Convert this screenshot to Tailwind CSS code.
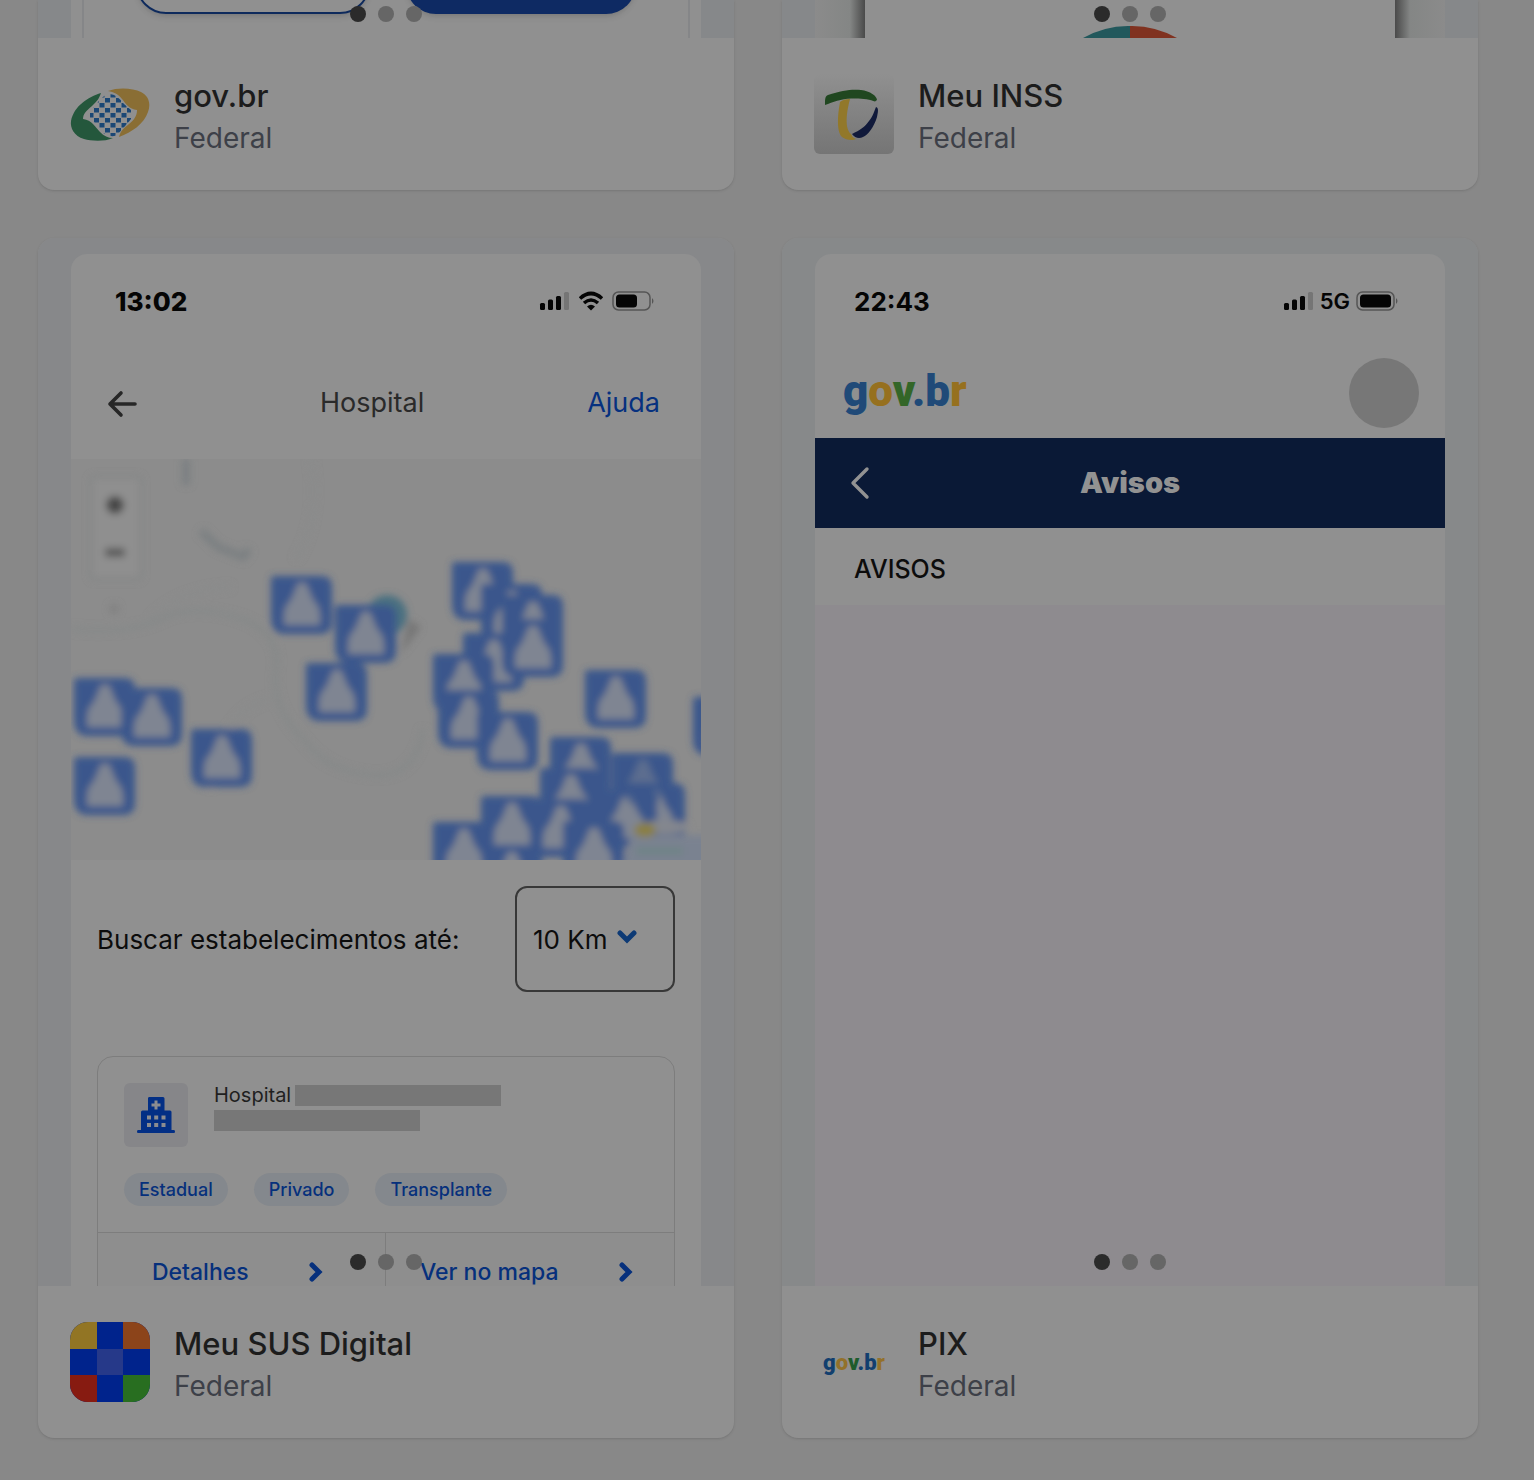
<!DOCTYPE html>
<html lang="pt-BR">
<head>
<meta charset="utf-8">
<meta name="viewport" content="width=device-width, initial-scale=1">
<title>Aplicativos federais</title>
<script src="https://cdn.jsdelivr.net/npm/@tailwindcss/browser@4"></script>
</head>
<body class="bg-[#888888] font-['Inter',sans-serif] text-[#1c1c1c]">
<main class="grid grid-cols-2 gap-12 pr-14 pl-[38px] pb-[42px]">

  <!-- gov.br -->
  <article class="overflow-hidden rounded-b-2xl bg-[#909090] shadow-sm">
    <div class="relative h-[38px] overflow-hidden bg-[#86888a] px-[33px]">
      <div class="flex h-full bg-[#909090] px-[11px]">
        <div class="flex h-full w-full items-end gap-9 border-x-2 border-[#858688] px-[52px] pb-6">
          <button aria-label="Voltar" class="-mt-10 h-[60px] flex-1 shrink-0 rounded-full border-2 border-[#0e2a5c] shadow-md"></button>
          <button aria-label="Continuar" class="-mt-10 h-[60px] flex-1 shrink-0 rounded-full bg-[#0e2a63] shadow-md"></button>
        </div>
      </div>
      <div class="absolute inset-x-0 bottom-4 flex justify-center gap-3">
        <button aria-label="Imagem 1" class="size-4 rounded-full bg-[#2b2b2b]"></button>
        <button aria-label="Imagem 2" class="size-4 rounded-full bg-[#666666]"></button>
        <button aria-label="Imagem 3" class="size-4 rounded-full bg-[#666666]"></button>
      </div>
    </div>
    <div class="flex h-[152px] items-center gap-6 px-8">
      <svg class="size-20" viewBox="0 0 80 80" aria-hidden="true">
        <defs>
          <pattern id="checks" x="35" y="34" width="11" height="10" patternUnits="userSpaceOnUse">
            <path d="M0 0h5v4.4H0zM5.5 5h5v4.4h-5z" fill="#1a4775"/>
          </pattern>
        </defs>
        <path d="M31 19C29 25 27 27 22 32C16 37 13 40 13 45C22 46 25 53 30 58C34 62 38 64 43 64C34 68 21 67 14 65C4 62 0 54 1 47C4 32 18 23 31 19Z" fill="#24573c"/>
        <path d="M38 17C48 13 63 14 71 18C79 22 81 30 78 38C74 50 62 58 49 63C51 56 54 54 59 50C64 46 67 42 67 36C59 35 56 30 52 25C48 20 44 18 38 17Z" fill="#8a6e34"/>
        <path d="M38 20C46 20 50 25 54 30L61 36V45C58 49 53 54 48 60C44 64 37 62 32 58C28 53 25 48 20 44V37C25 33 30 23 38 20Z" fill="url(#checks)"/>
      </svg>
      <div class="pt-1">
        <h2 class="text-[31px]/[44px] font-medium"><a href="#">gov.br</a></h2>
        <p class="text-[28px]/[40px] text-[#3d4048]">Federal</p>
      </div>
    </div>
  </article>

  <!-- Meu INSS -->
  <article class="overflow-hidden rounded-b-2xl bg-[#909090] shadow-sm">
    <div class="relative h-[38px] overflow-hidden bg-[#86888a] px-[33px]">
      <div class="flex h-full bg-[#8b8b8b]">
        <div class="w-[50px] bg-linear-to-l from-[#4a4a4a] via-[#848685] via-30% to-[#8b8b8b]"></div>
        <div class="flex flex-1 items-end justify-center bg-[#909090]">
          <svg class="h-3 w-24" viewBox="0 0 96 12" aria-hidden="true">
            <path d="M48 0V12H1A94 94 0 0 1 48 0Z" fill="#22585c"/>
            <path d="M48 0V12H95A94 94 0 0 0 48 0Z" fill="#803220"/>
          </svg>
        </div>
        <div class="w-[50px] bg-linear-to-r from-[#4a4a4a] via-[#848685] via-30% to-[#8b8b8b]"></div>
      </div>
      <div class="absolute inset-x-0 bottom-4 flex justify-center gap-3">
        <button aria-label="Imagem 1" class="size-4 rounded-full bg-[#2b2b2b]"></button>
        <button aria-label="Imagem 2" class="size-4 rounded-full bg-[#666666]"></button>
        <button aria-label="Imagem 3" class="size-4 rounded-full bg-[#666666]"></button>
      </div>
    </div>
    <div class="flex h-[152px] items-center gap-6 px-8">
      <svg class="size-20 rounded-md bg-linear-to-b from-[#909090] to-[#757575]" viewBox="0 0 80 80" aria-hidden="true">
        <path d="M11 31C11 25 11 22 14 21C28 16 39 15 47 16C56 17 63 22 63 26L61 27.500C56 25 46 24 37 24.500C27 25 19 28 11 31Z" fill="#204720"/>
        <path d="M26 28C28 26 32 25 36 25C33 36 32 45 33 52C34 59 38 60 38 62C39 64 41 64 42 65C38 67 32 66 28 63C22 57 24 39 26 28Z" fill="#92782a"/>
        <path d="M62 33C65 34 64 38 63 43C60 53 54 61 49 63C45 65 41 64 38 60C46 56 51 53 55 47C59 42 60 38 62 33Z" fill="#10193a"/>
      </svg>
      <div class="pt-1">
        <h2 class="text-[31px]/[44px] font-medium"><a href="#">Meu INSS</a></h2>
        <p class="text-[28px]/[40px] text-[#3d4048]">Federal</p>
      </div>
    </div>
  </article>

  <!-- Meu SUS Digital -->
  <article class="overflow-hidden rounded-2xl bg-[#909090] shadow-sm">
    <div class="relative h-[1048px] overflow-hidden bg-[#87888a] px-[33px] pt-4">
      <div class="flex h-full flex-col overflow-hidden rounded-t-2xl bg-[#909090]">
        <div class="flex h-[94px] shrink-0 items-center justify-between pr-[46px] pl-11 text-[26px] font-extrabold text-[#050505]">
          <span>13:02</span>
          <svg class="h-6 w-[116px]" viewBox="0 0 116 24" aria-hidden="true">
            <g fill="#050505">
              <rect x="1" y="14" width="5" height="7" rx="1.500"/><rect x="9" y="10.500" width="5" height="10.500" rx="1.500"/><rect x="17" y="7" width="5" height="14" rx="1.500"/>
              <rect x="25" y="3" width="5" height="18" rx="1.500" fill="#757575"/>
              <rect x="77" y="5.500" width="21" height="13" rx="3.500"/>
            </g>
            <path d="M41 9.500Q52 -.5 63 9.500M45 14Q52 8 59 14" fill="none" stroke="#050505" stroke-width="3.600"/>
            <path d="M48 17.500Q52 14 56 17.500L52 21.500Z" fill="#050505"/>
            <rect x="74" y="3" width="37" height="18" rx="5.500" fill="none" stroke="#555" stroke-width="1.500"/>
            <path d="M113 9Q116 12 113 15Z" fill="#555"/>
          </svg>
        </div>
        <div class="flex h-[111px] shrink-0 items-center justify-between pr-[41px] pl-9 text-[27px]">
          <button aria-label="Voltar" class="w-[50px]">
            <svg class="h-8 w-8" viewBox="0 0 32 32" fill="none" stroke="#272727" stroke-width="3.600" stroke-linecap="round" stroke-linejoin="round" aria-hidden="true"><path d="M28 16H3M14 5L3 16L14 27"/></svg>
          </button>
          <span class="text-[#2a2a2a]">Hospital</span>
          <a href="#" class="text-[#06317f]">Ajuda</a>
        </div>

        <!-- Mapa -->
        <svg class="h-[401px] w-full shrink-0 bg-[#8c8c8c]" viewBox="0 0 630 401" preserveAspectRatio="xMidYMid slice" role="img" aria-label="Mapa de hospitais">
          <defs>
            <g id="pin">
              <path d="M2 0H50Q61 0 61 11V46Q61 58 49 58H14Q0 58 0 42V2Z" fill="#3a568c"/>
              <path d="M27 7H35L42 24Q49 30 49 40V49H13V40Q13 30 20 24Z" fill="#7f8592"/>
            </g>
            <filter id="soft" x="-5%" y="-5%" width="110%" height="110%"><feGaussianBlur stdDeviation="3.600"/></filter>
          </defs>
          <g filter="url(#soft)">
            <g fill="none" stroke="#868989" stroke-width="5">
              <path d="M0 170Q60 175 90 160T165 158T205 210T232 280Q255 312 300 316T352 270" />
              <path d="M80 160Q110 130 160 128M240 0Q250 60 225 100M140 330Q150 250 200 240" stroke="#8a8b8b"/>
              <path d="M130 72L147 88L172 98L178 90M115 0V26" stroke="#7c8082" stroke-width="8"/>
            </g>
            <rect x="20" y="18" width="50" height="102" rx="4" fill="#8f8f8f" stroke="#838585" stroke-width="3"/>
            <circle cx="44" cy="46" r="9" fill="#484848"/>
            <rect x="34" y="89" width="20" height="9" rx="3" fill="#5c5c5c"/>
            <circle cx="43" cy="150" r="5" fill="#818181"/>
            <circle cx="316" cy="156" r="20" fill="#4a7080"/>
            <path d="M330 195L350 168L338 160Z" fill="#777"/>
            <use href="#pin" x="200" y="117"/><use href="#pin" x="264" y="146"/><use href="#pin" x="235" y="204"/>
            <use href="#pin" x="3" y="219"/><use href="#pin" x="50" y="229"/><use href="#pin" x="120" y="270"/><use href="#pin" x="3" y="298"/>
            <use href="#pin" x="381" y="103"/><use href="#pin" x="410" y="125"/><use href="#pin" x="392" y="174"/>
            <use href="#pin" x="431" y="136"/><use href="#pin" x="431" y="160"/>
            <use href="#pin" x="362" y="195"/><use href="#pin" x="367" y="231"/><use href="#pin" x="406" y="253"/>
            <use href="#pin" x="514" y="211"/><use href="#pin" x="622" y="238"/>
            <use href="#pin" x="479" y="278"/><use href="#pin" x="541" y="294"/><use href="#pin" x="469" y="309"/>
            <use href="#pin" x="553" y="324"/><use href="#pin" x="525" y="330"/>
            <path d="M541 300H596V328L584 346H560L548 334Z" fill="#3a568c" opacity=".5"/>
            <use href="#pin" x="459" y="340"/><use href="#pin" x="492" y="362"/>
            <use href="#pin" x="410" y="337"/><use href="#pin" x="410" y="386"/><use href="#pin" x="362" y="363"/>
            <path d="M560 376H640V410H550Z" fill="#7a8290"/>
            <ellipse cx="594" cy="368" rx="24" ry="7" fill="#84878e"/>
            <ellipse cx="574" cy="371" rx="11" ry="7" fill="#8a7f42"/>
            <path d="M565 392H612" stroke="#6f8387" stroke-width="8"/>
          </g>
        </svg>

        <div class="flex shrink-0 items-center justify-between px-[26px] pt-[26px] text-[26px] text-[#0c0c0c]">
          <label for="raio">Buscar estabelecimentos até:</label>
          <div class="relative">
            <select id="raio" class="h-[106px] w-[160px] appearance-none rounded-xl border-2 border-[#383838] bg-transparent pl-4">
              <option>10 Km</option>
              <option>20 Km</option>
            </select>
            <svg class="pointer-events-none absolute top-[42px] right-[38px] h-4 w-5" viewBox="0 0 20 16" fill="none" stroke="#0d3a75" stroke-width="5" stroke-linecap="round" aria-hidden="true"><path d="M3 5L10 12L17 5"/></svg>
          </div>
        </div>

        <section class="mx-[26px] mt-16 shrink-0 rounded-2xl border border-[#7d7d7d]">
          <div class="flex gap-[26px] px-[26px] pt-[26px] text-[20px]/[25px]">
            <div class="grid size-16 shrink-0 place-items-center rounded-md bg-[#868689]">
              <svg class="h-9 w-[38px]" viewBox="0 0 38 36" aria-hidden="true">
                <path d="M12 0H26Q27.500 0 27.500 1.500V13.500H33Q34.500 13.500 34.500 15V33H37Q38 33 38 34.500T37 36H1Q0 36 0 34.500T1 33H4V15Q4 13.500 5.500 13.500H11V1.500Q11 0 12 0Z" fill="#032f85"/>
                <path d="M17.500 3.500h3v3h3v3h-3v3h-3v-3h-3v-3h3zM10 18.500h4v4h-4zM17.200 18.500h4v4h-4zM24.500 18.500h4v4h-4zM10 26h4v4h-4zM17.200 26h4v4h-4zM24.500 26h4v4h-4z" fill="#8b8c90"/>
              </svg>
            </div>
            <div class="flex-1">
              <div class="flex items-center gap-1"><span class="text-[#1f1f1f]">Hospital</span><span class="h-[21px] w-[206px] bg-[#777777]"></span></div>
              <div class="mt-[2px] h-[21px] w-[206px] bg-[#777777]"></div>
            </div>
          </div>
          <ul class="flex gap-[26px] px-[26px] pt-[26px] pb-[26px] text-[18px]/[33px] font-medium text-[#06307c]">
            <li class="rounded-full bg-[#84888d] px-[15px]">Estadual</li>
            <li class="rounded-full bg-[#84888d] px-[15px]">Privado</li>
            <li class="rounded-full bg-[#84888d] px-[15px]">Transplante</li>
          </ul>
          <div class="grid grid-cols-2 divide-x divide-[#7d7d7d] border-t border-[#7d7d7d] bg-[#8e8e8e] text-[23px] font-medium text-[#06307c]">
            <button class="flex h-[78px] items-center justify-between pr-[62px] pl-[54px]">Detalhes
              <svg class="h-5 w-4" viewBox="0 0 16 20" fill="none" stroke="#06307c" stroke-width="5" stroke-linecap="round" aria-hidden="true"><path d="M5 3L12 10L5 17"/></svg>
            </button>
            <button class="flex h-[78px] items-center justify-between pr-[41px] pl-[34px]">Ver no mapa
              <svg class="h-5 w-4" viewBox="0 0 16 20" fill="none" stroke="#06307c" stroke-width="5" stroke-linecap="round" aria-hidden="true"><path d="M5 3L12 10L5 17"/></svg>
            </button>
          </div>
        </section>
      </div>
      <div class="absolute inset-x-0 bottom-4 flex justify-center gap-3">
        <button aria-label="Imagem 1" class="size-4 rounded-full bg-[#2b2b2b]"></button>
        <button aria-label="Imagem 2" class="size-4 rounded-full bg-[#666666]"></button>
        <button aria-label="Imagem 3" class="size-4 rounded-full bg-[#666666]"></button>
      </div>
    </div>
    <div class="flex h-[152px] items-center gap-6 px-8">
      <svg class="size-20 rounded-[18px]" viewBox="0 0 80 80" aria-hidden="true">
        <rect width="80" height="80" fill="#00238c"/>
        <rect width="27" height="27" fill="#927524"/><rect x="53" width="27" height="27" fill="#8c441a"/>
        <rect x="27" y="27" width="26" height="26" fill="#263989"/>
        <rect y="53" width="27" height="27" fill="#871b11"/><rect x="53" y="53" width="27" height="27" fill="#286e20"/>
      </svg>
      <div class="pt-1">
        <h2 class="text-[31px]/[44px] font-medium"><a href="#">Meu SUS Digital</a></h2>
        <p class="text-[28px]/[40px] text-[#3d4048]">Federal</p>
      </div>
    </div>
  </article>

  <!-- PIX -->
  <article class="overflow-hidden rounded-2xl bg-[#909090] shadow-sm">
    <div class="relative h-[1048px] overflow-hidden bg-[#87898a] px-[33px] pt-4">
      <div class="flex h-full flex-col overflow-hidden rounded-t-2xl bg-[#909090]">
        <div class="flex h-[94px] shrink-0 items-center justify-between pr-[46px] pl-[39px] text-[26px] font-bold text-[#050505]">
          <span>22:43</span>
          <div class="flex items-center gap-1.5 text-[22px] font-semibold">
            <svg class="h-6 w-[31px]" viewBox="0 0 31 24" fill="#050505" aria-hidden="true">
              <rect x="1" y="14" width="5" height="7" rx="1.500"/><rect x="9" y="10.500" width="5" height="10.500" rx="1.500"/><rect x="17" y="7" width="5" height="14" rx="1.500"/>
              <rect x="25" y="3" width="5" height="18" rx="1.500" fill="#757575"/>
            </svg>
            <span>5G</span>
            <svg class="h-6 w-[43px]" viewBox="0 0 43 24" aria-hidden="true">
              <rect x="4" y="5.500" width="31" height="13" rx="3.500" fill="#050505"/>
              <rect x="1" y="3" width="37" height="18" rx="5.500" fill="none" stroke="#555" stroke-width="1.500"/>
              <path d="M40 9Q43 12 40 15Z" fill="#555"/>
            </svg>
          </div>
        </div>
        <div class="flex h-[90px] shrink-0 items-center justify-between pr-[26px] pl-7">
          <a href="#" class="pb-1 font-['Roboto',sans-serif] text-[44px]/[48px] font-black text-[#204a78]">g<span class="text-[#96701f]">o</span><span class="text-[#336628]">v</span>.b<span class="text-[#96701f]">r</span></a>
          <span class="size-[70px] rounded-full bg-[#777777]"></span>
        </div>
        <div class="grid h-[90px] shrink-0 grid-cols-3 items-center bg-[#0a1936] px-8 text-[#929292]">
          <button aria-label="Voltar" class="justify-self-start">
            <svg class="h-9 w-6" viewBox="0 0 24 36" fill="none" stroke="#929292" stroke-width="3.400" stroke-linecap="round" stroke-linejoin="round" aria-hidden="true"><path d="M20 4L6 18L20 32"/></svg>
          </button>
          <h3 class="text-center text-[29px] font-black">Avisos</h3>
        </div>
        <p class="h-[77px] shrink-0 pl-[39px] text-[25px]/[82px] font-medium text-[#0c0c0c]">AVISOS</p>
        <div class="flex-1 bg-[#8e8b8f]"></div>
      </div>
      <div class="absolute inset-x-0 bottom-4 flex justify-center gap-3">
        <button aria-label="Imagem 1" class="size-4 rounded-full bg-[#2b2b2b]"></button>
        <button aria-label="Imagem 2" class="size-4 rounded-full bg-[#666666]"></button>
        <button aria-label="Imagem 3" class="size-4 rounded-full bg-[#666666]"></button>
      </div>
    </div>
    <div class="flex h-[152px] items-center gap-6 px-8">
      <span class="w-20 text-center font-['Roboto',sans-serif] text-[22px] font-black text-[#123f6e]">g<span class="text-[#93712a]">o</span><span class="text-[#1f5c2c]">v</span>.b<span class="text-[#93712a]">r</span></span>
      <div class="pt-1">
        <h2 class="text-[31px]/[44px] font-medium"><a href="#">PIX</a></h2>
        <p class="text-[28px]/[40px] text-[#3d4048]">Federal</p>
      </div>
    </div>
  </article>
</main>
</body>
</html>
